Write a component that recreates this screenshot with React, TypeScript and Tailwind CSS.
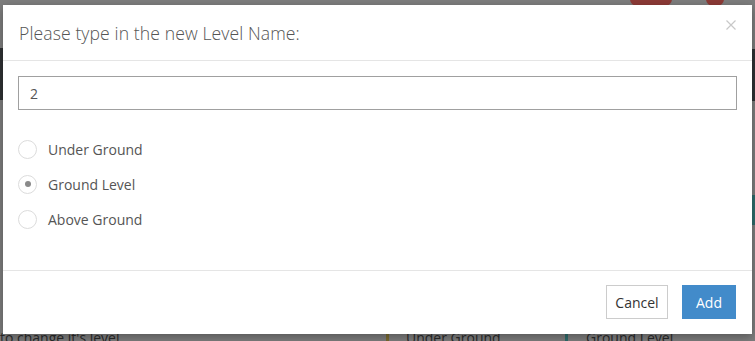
import React from "react";

export default function App() {
  const options = [
    { label: "Under Ground", checked: false },
    { label: "Ground Level", checked: true },
    { label: "Above Ground", checked: false },
  ];
  return (
    <div
      className="relative w-[755px] h-[341px] overflow-hidden bg-[#7d7d7d]"
      style={{ fontFamily: '"Open Sans", "Liberation Sans", sans-serif' }}
    >
      {/* dimmed page behind */}
      <div className="absolute left-0 top-[48px] w-[8px] h-[52px] bg-[#2f3133]" />
      <div className="absolute right-0 top-[49px] w-[8px] h-[52px] bg-[#2f3133]" />
      <div className="absolute right-0 top-[195px] w-[8px] h-[30px] bg-[#2f6b6b]" />
      <div className="absolute left-[630px] top-[-8px] w-[42px] h-[14px] rounded-full bg-[#8c3a36]" />
      <div className="absolute left-[706px] top-[-8px] w-[18px] h-[14px] rounded-full bg-[#8c3a36]" />
      <div className="absolute left-[0px] top-[331px] text-[14px] text-[#2a2a2a] leading-none">
        to change it's level
      </div>
      <div className="absolute left-[386px] top-[334px] w-[3px] h-[10px] bg-[#7a6a30]" />
      <div className="absolute left-[406px] top-[331px] text-[14px] text-[#2a2a2a] leading-none">
        Under Ground
      </div>
      <div className="absolute left-[565px] top-[334px] w-[3px] h-[10px] bg-[#2f6b6b]" />
      <div className="absolute left-[586px] top-[331px] text-[14px] text-[#2a2a2a] leading-none">
        Ground Level
      </div>

      {/* modal */}
      <div className="absolute left-[3px] top-[5px] w-[749px] h-[329px] bg-white flex flex-col shadow-[0_3px_9px_rgba(0,0,0,0.3)]">
        <div className="h-[56px] border-b border-[#e5e5e5] flex items-center justify-between pl-[16px] pr-[15px]">
          <div className="text-[17.6px] text-[#555] font-light tracking-[0.1px] pt-[1px]">
            Please type in the new Level Name:
          </div>
          <svg width="10" height="10" viewBox="0 0 10 10" className="-mt-[16px] mr-[1px]">
            <path d="M0.5 0.5 L9.5 9.5 M9.5 0.5 L0.5 9.5" stroke="#c8c8c8" strokeWidth="1.2" fill="none" />
          </svg>
        </div>
        <div className="flex-1 flex flex-col px-[15px] pt-[15px]">
          <div className="h-[34px] border border-[#a0a0a0] flex items-center pl-[11px] text-[14px] text-[#555]">
            2
          </div>
          <div className="flex flex-col gap-[15px] mt-[29px]">
            {options.map((o) => (
              <div key={o.label} className="flex items-center h-[20px]">
                <div className="w-[19px] h-[19px] rounded-full border border-[#dcdcdc] flex items-center justify-center">
                  {o.checked && <div className="w-[6px] h-[6px] rounded-full bg-[#8a8a8a]" />}
                </div>
                <div className="ml-[11px] text-[14px] text-[#555]">{o.label}</div>
              </div>
            ))}
          </div>
        </div>
        <div className="h-[64px] border-t border-[#e5e5e5] flex items-center justify-end gap-[14px] pr-[16px] pb-[1px]">
          <div className="h-[34px] w-[62px] border border-[#cccccc] flex items-center justify-center text-[14px] text-[#333]">
            Cancel
          </div>
          <div className="h-[34px] w-[54px] bg-[#428bca] flex items-center justify-center text-[14px] text-white">
            Add
          </div>
        </div>
      </div>
    </div>
  );
}
